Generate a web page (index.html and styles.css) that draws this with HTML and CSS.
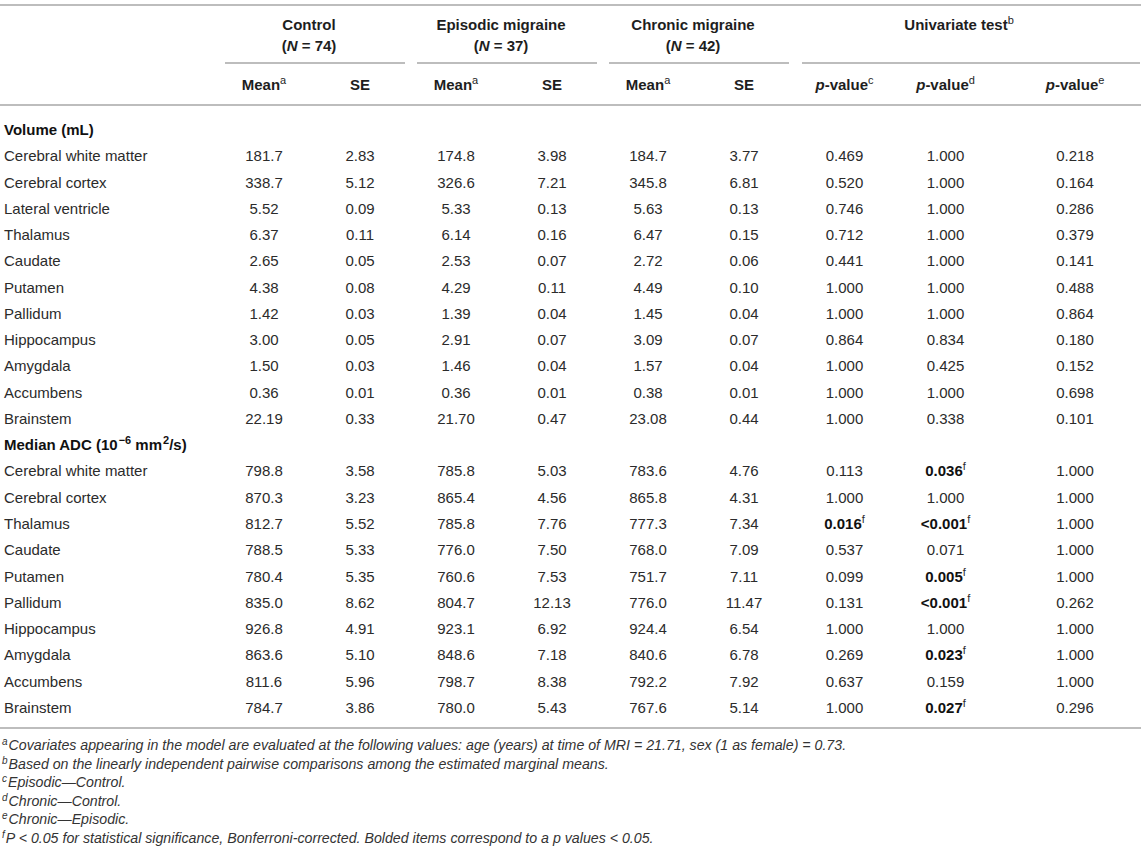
FILE: index.html
```html
<!DOCTYPE html>
<html lang="en">
<head>
<meta charset="utf-8">
<title>Table</title>
<link rel="stylesheet" href="styles.css">
</head>
<body>
<table class="tbl">
  <colgroup>
    <col class="c-name">
    <col class="c-num"><col class="c-num">
    <col class="c-num"><col class="c-num">
    <col class="c-num"><col class="c-num">
    <col class="c-pc"><col class="c-pd"><col class="c-pe">
  </colgroup>
  <thead>
    <tr class="h1">
      <th></th>
      <th colspan="2" class="grp"><div class="grp-in">Control<br>(<i>N</i> = 74)</div></th>
      <th colspan="2" class="grp"><div class="grp-in">Episodic migraine<br>(<i>N</i> = 37)</div></th>
      <th colspan="2" class="grp"><div class="grp-in">Chronic migraine<br>(<i>N</i> = 42)</div></th>
      <th colspan="3" class="grp grp-last"><div class="grp-in uni">Univariate test<sup>b</sup><br>&nbsp;</div></th>
    </tr>
    <tr class="h2">
      <th></th>
      <th>Mean<sup>a</sup></th><th>SE</th>
      <th>Mean<sup>a</sup></th><th>SE</th>
      <th>Mean<sup>a</sup></th><th>SE</th>
      <th><i>p</i>-value<sup>c</sup></th>
      <th><i>p</i>-value<sup>d</sup></th>
      <th class="pe"><i>p</i>-value<sup>e</sup></th>
    </tr>
  </thead>
  <tbody>
    <tr class="sec first"><td colspan="10"><b>Volume (mL)</b></td></tr>
    <tr><td>Cerebral white matter</td><td>181.7</td><td>2.83</td><td>174.8</td><td>3.98</td><td>184.7</td><td>3.77</td><td>0.469</td><td>1.000</td><td class="pe">0.218</td></tr>
    <tr><td>Cerebral cortex</td><td>338.7</td><td>5.12</td><td>326.6</td><td>7.21</td><td>345.8</td><td>6.81</td><td>0.520</td><td>1.000</td><td class="pe">0.164</td></tr>
    <tr><td>Lateral ventricle</td><td>5.52</td><td>0.09</td><td>5.33</td><td>0.13</td><td>5.63</td><td>0.13</td><td>0.746</td><td>1.000</td><td class="pe">0.286</td></tr>
    <tr><td>Thalamus</td><td>6.37</td><td>0.11</td><td>6.14</td><td>0.16</td><td>6.47</td><td>0.15</td><td>0.712</td><td>1.000</td><td class="pe">0.379</td></tr>
    <tr><td>Caudate</td><td>2.65</td><td>0.05</td><td>2.53</td><td>0.07</td><td>2.72</td><td>0.06</td><td>0.441</td><td>1.000</td><td class="pe">0.141</td></tr>
    <tr><td>Putamen</td><td>4.38</td><td>0.08</td><td>4.29</td><td>0.11</td><td>4.49</td><td>0.10</td><td>1.000</td><td>1.000</td><td class="pe">0.488</td></tr>
    <tr><td>Pallidum</td><td>1.42</td><td>0.03</td><td>1.39</td><td>0.04</td><td>1.45</td><td>0.04</td><td>1.000</td><td>1.000</td><td class="pe">0.864</td></tr>
    <tr><td>Hippocampus</td><td>3.00</td><td>0.05</td><td>2.91</td><td>0.07</td><td>3.09</td><td>0.07</td><td>0.864</td><td>0.834</td><td class="pe">0.180</td></tr>
    <tr><td>Amygdala</td><td>1.50</td><td>0.03</td><td>1.46</td><td>0.04</td><td>1.57</td><td>0.04</td><td>1.000</td><td>0.425</td><td class="pe">0.152</td></tr>
    <tr><td>Accumbens</td><td>0.36</td><td>0.01</td><td>0.36</td><td>0.01</td><td>0.38</td><td>0.01</td><td>1.000</td><td>1.000</td><td class="pe">0.698</td></tr>
    <tr><td>Brainstem</td><td>22.19</td><td>0.33</td><td>21.70</td><td>0.47</td><td>23.08</td><td>0.44</td><td>1.000</td><td>0.338</td><td class="pe">0.101</td></tr>
    <tr class="sec"><td colspan="10"><b>Median ADC (10<sup>−6</sup> mm<sup>2</sup>/s)</b></td></tr>
    <tr><td>Cerebral white matter</td><td>798.8</td><td>3.58</td><td>785.8</td><td>5.03</td><td>783.6</td><td>4.76</td><td>0.113</td><td><b>0.036</b><sup>f</sup></td><td class="pe">1.000</td></tr>
    <tr><td>Cerebral cortex</td><td>870.3</td><td>3.23</td><td>865.4</td><td>4.56</td><td>865.8</td><td>4.31</td><td>1.000</td><td>1.000</td><td class="pe">1.000</td></tr>
    <tr><td>Thalamus</td><td>812.7</td><td>5.52</td><td>785.8</td><td>7.76</td><td>777.3</td><td>7.34</td><td><b>0.016</b><sup>f</sup></td><td><b>&lt;0.001</b><sup>f</sup></td><td class="pe">1.000</td></tr>
    <tr><td>Caudate</td><td>788.5</td><td>5.33</td><td>776.0</td><td>7.50</td><td>768.0</td><td>7.09</td><td>0.537</td><td>0.071</td><td class="pe">1.000</td></tr>
    <tr><td>Putamen</td><td>780.4</td><td>5.35</td><td>760.6</td><td>7.53</td><td>751.7</td><td>7.11</td><td>0.099</td><td><b>0.005</b><sup>f</sup></td><td class="pe">1.000</td></tr>
    <tr><td>Pallidum</td><td>835.0</td><td>8.62</td><td>804.7</td><td>12.13</td><td>776.0</td><td>11.47</td><td>0.131</td><td><b>&lt;0.001</b><sup>f</sup></td><td class="pe">0.262</td></tr>
    <tr><td>Hippocampus</td><td>926.8</td><td>4.91</td><td>923.1</td><td>6.92</td><td>924.4</td><td>6.54</td><td>1.000</td><td>1.000</td><td class="pe">1.000</td></tr>
    <tr><td>Amygdala</td><td>863.6</td><td>5.10</td><td>848.6</td><td>7.18</td><td>840.6</td><td>6.78</td><td>0.269</td><td><b>0.023</b><sup>f</sup></td><td class="pe">1.000</td></tr>
    <tr><td>Accumbens</td><td>811.6</td><td>5.96</td><td>798.7</td><td>8.38</td><td>792.2</td><td>7.92</td><td>0.637</td><td>0.159</td><td class="pe">1.000</td></tr>
    <tr class="last"><td>Brainstem</td><td>784.7</td><td>3.86</td><td>780.0</td><td>5.43</td><td>767.6</td><td>5.14</td><td>1.000</td><td><b>0.027</b><sup>f</sup></td><td class="pe">0.296</td></tr>
  </tbody>
</table>
<div class="notes">
  <p><sup>a</sup>Covariates appearing in the model are evaluated at the following values: age (years) at time of MRI = 21.71, sex (1 as female) = 0.73.</p>
  <p><sup>b</sup>Based on the linearly independent pairwise comparisons among the estimated marginal means.</p>
  <p><sup>c</sup>Episodic—Control.</p>
  <p><sup>d</sup>Chronic—Control.</p>
  <p><sup>e</sup>Chronic—Episodic.</p>
  <p><sup>f</sup>P &lt; 0.05 for statistical significance, Bonferroni-corrected. Bolded items correspond to a p values &lt; 0.05.</p>
</div>
</body>
</html>
```

FILE: styles.css
```css
html, body {
  margin: 0;
  padding: 0;
  background: #ffffff;
}
body {
  font-family: "Liberation Sans", Arial, Helvetica, sans-serif;
  color: #2b2b2b;
  font-size: 15px;
}
.tbl {
  margin-top: 4px;
  width: 1141px;
  table-layout: fixed;
  border-collapse: collapse;
  border-top: 2px solid #bdbdbd;
  border-bottom: 2px solid #bdbdbd;
}
.c-name { width: 219px; }
.c-num { width: 96px; }
.c-pc { width: 105px; }
.c-pd { width: 97px; }
.c-pe { width: 144px; }

th, td {
  padding: 0 6px 0 0;
  text-align: center;
  font-weight: normal;
}
th {
  font-weight: bold;
  color: #1e1e1e;
}
sup {
  font-size: 11px;
  line-height: 0;
  vertical-align: 6px;
  font-weight: normal;
}
.sec sup { font-weight: bold; margin-left: 1px; }

.h1 th {
  padding: 0 6px;
  vertical-align: bottom;
}
.h1 th.grp-last { padding: 0 1px 0 7px; }
.grp-in {
  padding: 8px 12px 6px 0;
  line-height: 21px;
  border-bottom: 2px solid #bdbdbd;
}
.grp-in.uni { padding-right: 24px; }

.h2 th {
  height: 40px;
  line-height: 21px;
  padding-top: 0;
  vertical-align: middle;
}
thead .h2 { border-bottom: 2px solid #bdbdbd; }

td {
  line-height: 26.27px;
  height: 26.27px;
  white-space: nowrap;
}
td:first-child {
  text-align: left;
  padding-left: 4px;
}
.sec td { text-align: left; padding-left: 4px; color: #1e1e1e; }
tr.first td { padding-top: 11px; }
tr.last td { padding-bottom: 6px; }
.pe { padding-left: 18px; }
td b { color: #111; }

.notes {
  margin-top: 7px;
  padding-left: 2px;
  font-style: italic;
  font-size: 14.2px;
  line-height: 18.6px;
  color: #333;
}
.notes p { margin: 0; }
.notes sup {
  font-size: 10px;
  vertical-align: 5px;
  margin-right: 1px;
}
```
